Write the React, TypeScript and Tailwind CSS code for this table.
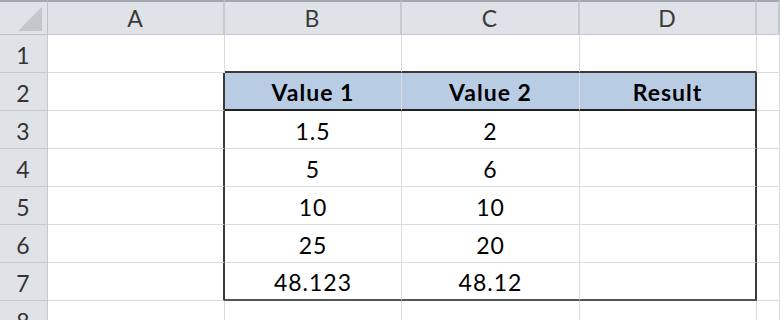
import React from "react";

const cols = ["A", "B", "C", "D", ""];
const rows = [1, 2, 3, 4, 5, 6, 7, 8];

const data: Record<number, string[]> = {
  2: ["Value 1", "Value 2", "Result"],
  3: ["1.5", "2", ""],
  4: ["5", "6", ""],
  5: ["10", "10", ""],
  6: ["25", "20", ""],
  7: ["48.123", "48.12", ""],
};

const inTable = (r: number) => r >= 2 && r <= 7;

const Cell = ({ row, col }: { row: number; col: number }) => {
  // col 0 = A, 1..3 = B..D, 4 = E
  const table = inTable(row) && col >= 1 && col <= 3;
  const header = row === 2 && table;
  let cls = "flex items-center justify-center border-r border-b border-[#dadcde] pt-[3px]";
  if (table) cls += " text-[#000]";
  if (header) cls += " bg-[#b8cce4] font-bold border-b-[2px] border-b-[#222]";
  if (row === 7 && table) cls += " border-b-[2px] border-b-[#555]";
  if (row === 1 && col >= 1 && col <= 3) cls += " border-b-[2px] border-b-[#3a3a3a]";
  if (inTable(row) && col === 0) cls += " border-r-[2px] border-r-[#3a3a3a]";
  if (table && col === 3) cls += " border-r-[2px] border-r-[#3a3a3a]";
  const text = table ? data[row][col - 1] : "";
  return <div className={cls}>{text}</div>;
};

export default function App() {
  return (
    <div
      className="w-[780px] h-[320px] overflow-hidden bg-white text-[23px] tracking-[1px] text-[#1a1a1a]"
      style={{ fontFamily: "Lato, 'Open Sans', sans-serif" }}
    >
      <div className="grid grid-cols-[48px_177px_177px_178px_177px_1fr] grid-rows-[35px_repeat(8,38px)]">
        <div className="bg-[#dfe3e8] border-t-[2px] border-t-[#a3a8b0] border-r border-b border-[#bfc3c8] flex items-end justify-end pr-[5px] pb-[3px]">
          <svg width="24" height="24" viewBox="0 0 24 24">
            <polygon points="24,0 24,24 0,24" fill="#c3c7cc" />
          </svg>
        </div>
        {cols.map((c, i) => (
          <div
            key={i}
            className="bg-[#dfe3e8] border-t-[2px] border-t-[#a3a8b0] border-r-[2px] border-b border-[#c6cacf] flex items-center justify-center text-[#3b3b3b]"
          >
            {c}
          </div>
        ))}
        {rows.map((r) => (
          <React.Fragment key={r}>
            <div className="bg-[#dfe3e8] border-r border-b border-[#c6cacf] flex items-center justify-center text-[#333] pt-[3px]">
              {r}
            </div>
            {[0, 1, 2, 3, 4].map((c) => (
              <Cell key={c} row={r} col={c} />
            ))}
          </React.Fragment>
        ))}
      </div>
    </div>
  );
}
